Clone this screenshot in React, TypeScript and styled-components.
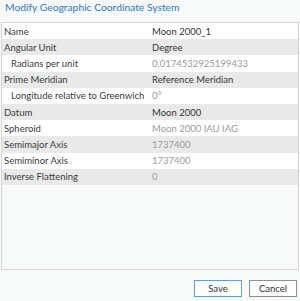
import React from "react";
import styled, { createGlobalStyle } from "styled-components";

const Global = createGlobalStyle`
  html, body { margin: 0; padding: 0; }
  body { background: #f7f8f8; font-family: Lato, "Open Sans", sans-serif; }
`;

const Dialog = styled.div`
  width: 300px;
  height: 301px;
  box-sizing: border-box;
  display: flex;
  flex-direction: column;
  background: #f7f8f8;
`;

const Title = styled.div`
  height: 22px;
  padding-left: 5px;
  font-size: 10.3px;
  line-height: 14px;
  color: #2a79c8;
`;

const Panel = styled.div`
  margin: 0 1px 0 1px;
  height: 248px;
  box-sizing: border-box;
  border: 1px solid #d6d6d6;
  background: #f7f8f8;
  display: flex;
  flex-direction: column;
`;

const Row = styled.div<{ $alt: boolean }>`
  display: grid;
  grid-template-columns: 150px 1fr;
  height: 16.2px;
  align-items: center;
  background: ${(p) => (p.$alt ? "#e9e9e9" : "#ffffff")};
  font-size: 9.5px;
`;

const Label = styled.div<{ $indent: boolean }>`
  padding-left: ${(p) => (p.$indent ? "9px" : "2px")};
  color: #3a3a3a;
  white-space: nowrap;
`;

const Value = styled.div<{ $muted: boolean }>`
  color: ${(p) => (p.$muted ? "#9a9a9a" : "#333333")};
  white-space: nowrap;
`;

const Footer = styled.div`
  display: flex;
  justify-content: flex-end;
  gap: 7px;
  padding: 10px 3px 0 0;
`;

const Button = styled.button<{ $primary?: boolean }>`
  width: 48px;
  height: 17px;
  padding: 0;
  box-sizing: border-box;
  background: #fdfdfd;
  border: 1px solid ${(p) => (p.$primary ? "#5b9fe0" : "#8f8f8f")};
  font-family: Lato, "Open Sans", sans-serif;
  font-size: 9.5px;
  color: #333333;
`;

const rows = [
  { l: "Name", v: "Moon 2000_1", i: false, m: false },
  { l: "Angular Unit", v: "Degree", i: false, m: false },
  { l: "Radians per unit", v: "0.0174532925199433", i: true, m: true },
  { l: "Prime Meridian", v: "Reference Meridian", i: false, m: false },
  { l: "Longitude relative to Greenwich", v: "0°", i: true, m: true },
  { l: "Datum", v: "Moon 2000", i: false, m: false },
  { l: "Spheroid", v: "Moon 2000 IAU IAG", i: false, m: true },
  { l: "Semimajor Axis", v: "1737400", i: false, m: true },
  { l: "Semiminor Axis", v: "1737400", i: false, m: true },
  { l: "Inverse Flattening", v: "0", i: false, m: true },
];

export default function App() {
  return (
    <>
      <Global />
      <Dialog>
        <Title>Modify Geographic Coordinate System</Title>
        <Panel>
          {rows.map((r, idx) => (
            <Row key={r.l} $alt={idx % 2 === 1}>
              <Label $indent={r.i}>{r.l}</Label>
              <Value $muted={r.m}>{r.v}</Value>
            </Row>
          ))}
        </Panel>
        <Footer>
          <Button $primary>Save</Button>
          <Button>Cancel</Button>
        </Footer>
      </Dialog>
    </>
  );
}
